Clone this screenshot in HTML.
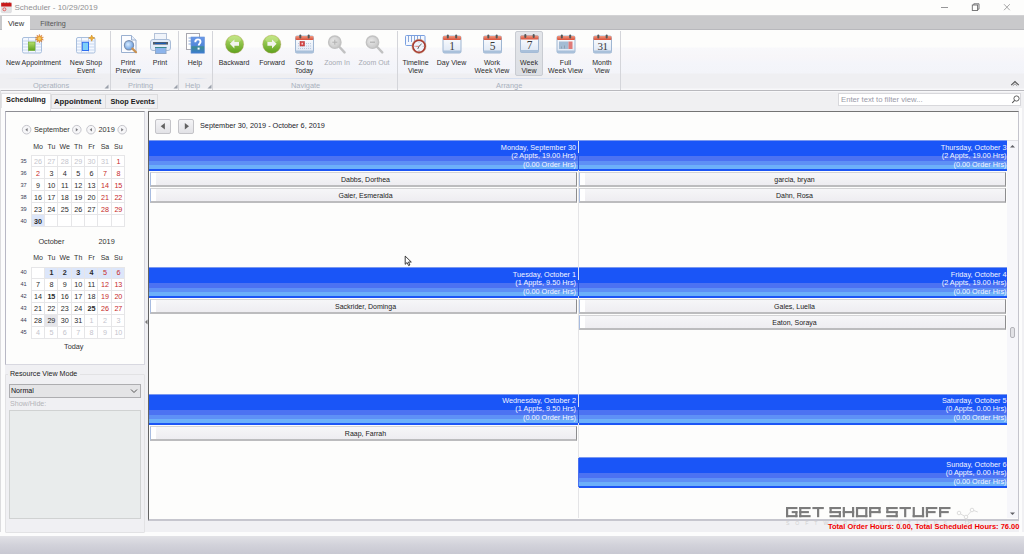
<!DOCTYPE html>
<html><head><meta charset="utf-8">
<style>
*{margin:0;padding:0;box-sizing:border-box}
html,body{width:1024px;height:554px;overflow:hidden;background:#f0f0f3;font-family:"Liberation Sans",sans-serif;color:#222}
.a{position:absolute}
.t{position:absolute;white-space:nowrap;line-height:1}
#title{left:0;top:0;width:1024px;height:15px;background:#fdfdfc}
#tabs{left:0;top:15px;width:1024px;height:15px;background:#c9c9cb;border-top:1px solid #d2d2d4;border-bottom:1px solid #b8b8bc}
#ribbon{left:0;top:30px;width:1024px;height:61px;background:linear-gradient(#fdfdfc 0,#fdfdfc 17px,#f8f8fb 18px,#f7f6f9 27px,#f4f5fa 33px,#f3f4f9 43px,#efeff2 44px,#efeff2 58px,#f8f8fa 59px,#f8f8fa 60px);border-bottom:1px solid #b9b9be}
.sep{position:absolute;top:31px;width:1px;height:59px;background:#d4d5da}
.gl{position:absolute;top:81.5px;font-size:7.4px;color:#a9b1bd;white-space:nowrap;line-height:1}
.rl{position:absolute;font-size:8px;color:#2a2a2a;white-space:nowrap;line-height:8.4px;text-align:center;transform:scaleX(0.875)}
.dis{color:#a7aab2}
#row2{left:0;top:91px;width:1024px;height:20px;background:linear-gradient(#f8f8fa 0,#f8f8fa 1px,#f0f0f2 1px)}
#status{left:0;top:536px;width:1024px;height:18px;background:linear-gradient(#e2e2e6 0,#dcdce2 3px,#d2d2da 9px,#c8c8d2 18px)}
#leftcal{left:5px;top:111px;width:140px;height:254px;background:#fdfdfc;border:1px solid #d8d8e0;border-top-color:#8e8e94;border-left-color:#b8b8c4}
#main{left:148px;top:111px;width:871px;height:410px;background:#fdfdfc;border-left:1px solid #646464;border-top:1px solid #747474;border-right:1px solid #c4c4cc;border-bottom:2px solid #c6c6ce}
</style></head><body>
<div id="title" class="a"></div>
<div class="t" style="left:14.5px;top:4px;font-size:8px;color:#909092">Scheduler - 10/29/2019</div>
<svg class="a" style="left:0;top:0" width="14" height="15"><rect x="1.2" y="3.5" width="10.2" height="9.2" rx="1" fill="#e2e2e4" stroke="#d0d0d4" stroke-width="0.5"/><rect x="1.2" y="2.7" width="10.3" height="3.8" fill="#c81818"/><path d="M2.5 2.7l1 -0.5 1 0.5M5.5 2.7l1-0.5 1 0.5M8.5 2.7l1-0.5 1 0.5" stroke="#e8e8e8" stroke-width="0.5"/><circle cx="4.4" cy="9.3" r="1.5" fill="none" stroke="#e85050" stroke-width="0.9"/></svg>
<svg class="a" style="left:930px;top:0" width="94" height="15"><path d="M11 7.5h7" stroke="#8a8a8c" stroke-width="0.9"/><rect x="42.3" y="5" width="5.3" height="5.5" fill="none" stroke="#6a6a6c" stroke-width="0.9"/><path d="M43.8 5v-1.2h5.2v5.4h-1.3" fill="none" stroke="#6a6a6c" stroke-width="0.9"/><path d="M74 4.2l5.8 6M79.8 4.2l-5.8 6" stroke="#909092" stroke-width="0.8"/></svg>
<div id="tabs" class="a"></div>
<div class="a" style="left:2px;top:16px;width:28px;height:15px;background:#fff"></div>
<div class="t" style="left:8px;top:19.8px;font-size:7.5px;color:#333">View</div>
<div class="t" style="left:40.2px;top:19.8px;font-size:7.2px;color:#555">Filtering</div>
<div id="ribbon" class="a"></div>

<div class="sep" style="left:110px"></div>
<div class="sep" style="left:178px"></div>
<div class="sep" style="left:212px"></div>
<div class="sep" style="left:397px"></div>
<div class="sep" style="left:620px"></div>
<div class="a" style="left:5px;top:78px;width:100px;height:1px;background:linear-gradient(90deg,rgba(200,215,240,0),#d4def0,rgba(200,215,240,0))"></div>
<div class="a" style="left:115px;top:78px;width:58px;height:1px;background:linear-gradient(90deg,rgba(200,215,240,0),#d4def0,rgba(200,215,240,0))"></div>
<div class="a" style="left:184px;top:78px;width:24px;height:1px;background:linear-gradient(90deg,rgba(200,215,240,0),#d4def0,rgba(200,215,240,0))"></div>
<div class="a" style="left:218px;top:78px;width:172px;height:1px;background:linear-gradient(90deg,rgba(200,215,240,0),#d4def0,rgba(200,215,240,0))"></div>
<div class="a" style="left:402px;top:78px;width:212px;height:1px;background:linear-gradient(90deg,rgba(200,215,240,0),#d4def0,rgba(200,215,240,0))"></div>
<!-- week view selected -->
<div class="a" style="left:515px;top:31px;width:28px;height:45px;background:linear-gradient(#e4e6ea,#dcdfe4);border:1px solid #c9ccd2;border-radius:2px"></div>
<svg class="a" style="left:0;top:0" width="640" height="60" viewBox="0 0 640 60">
<defs>
<linearGradient id="calbody" x1="0" y1="0" x2="0" y2="1"><stop offset="0" stop-color="#ffffff"/><stop offset="1" stop-color="#dce6f4"/></linearGradient>
<linearGradient id="calhdr" x1="0" y1="0" x2="0" y2="1"><stop offset="0" stop-color="#f09a80"/><stop offset="1" stop-color="#d9503a"/></linearGradient>
<linearGradient id="grn" x1="0" y1="0" x2="0" y2="1"><stop offset="0" stop-color="#b6e070"/><stop offset="1" stop-color="#5ea01c"/></linearGradient>
<linearGradient id="helpg" x1="0" y1="0" x2="0" y2="1"><stop offset="0" stop-color="#6b98e8"/><stop offset="0.55" stop-color="#4f86d8"/><stop offset="0.6" stop-color="#3d8c92"/><stop offset="1" stop-color="#3a7ad0"/></linearGradient>
<radialGradient id="lens" cx="0.4" cy="0.4" r="0.6"><stop offset="0" stop-color="#d8ecff"/><stop offset="1" stop-color="#6a9ee0"/></radialGradient>
<radialGradient id="glens" cx="0.4" cy="0.4" r="0.6"><stop offset="0" stop-color="#e6e6e6"/><stop offset="1" stop-color="#c4c4c4"/></radialGradient>
</defs>
<!-- New Appointment -->
<g>
<rect x="22.5" y="37.5" width="19" height="15.5" rx="1.5" fill="#f4f8ff" stroke="#a8bedc"/>
<path d="M23 41h18M23 44h18M23 47h18M23 50h18" stroke="#c8d8f0" stroke-width="1"/>
<path d="M28.5 38v15M35.5 38v15" stroke="#c4d2e6" stroke-width="1"/>
<rect x="28.5" y="42" width="6.5" height="8.5" fill="url(#grn)" stroke="#6aa828" stroke-width="0.6"/>
<path d="M39.40 34.30 L40.11 36.41 L41.93 35.12 L41.26 37.25 L43.49 37.27 L41.70 38.60 L43.49 39.93 L41.26 39.95 L41.93 42.08 L40.11 40.79 L39.40 42.90 L38.69 40.79 L36.87 42.08 L37.54 39.95 L35.31 39.93 L37.10 38.60 L35.31 37.27 L37.54 37.25 L36.87 35.12 L38.69 36.41 z" fill="#eaa22a" stroke="#d06a30" stroke-width="0.4"/><circle cx="39.4" cy="38.6" r="1.6" fill="#f6c860"/>
</g>
<!-- New Shop Event -->
<g>
<rect x="76.5" y="37.5" width="18.5" height="15.5" rx="1.5" fill="#f4f8ff" stroke="#a8bedc"/>
<path d="M77 41h18M77 44h18M77 47h18M77 50h18" stroke="#c8d8f0" stroke-width="1"/>
<path d="M81.5 38v15M88.5 38v15" stroke="#c4d2e6" stroke-width="1"/>
<rect x="82.3" y="42.3" width="6.2" height="8.2" fill="#7cd0f8" stroke="#2f6ef0" stroke-width="1"/>
<path d="M91.7 35l0.9 2.2 2.2 0.8-2.2 0.8-0.9 2.4-0.9-2.4-2.2-0.8 2.2-0.8z" fill="#f0b030" stroke="#d08a20" stroke-width="0.6"/>
</g>
<!-- Print Preview -->
<g>
<path d="M121.5 35.5h10l4.5 4.5v12.5h-14.5z" fill="#fbfcff" stroke="#9ab0d0"/>
<path d="M131.5 35.5v4.5h4.5" fill="#e8eef8" stroke="#9ab0d0"/>
<circle cx="129" cy="45.3" r="4.6" fill="url(#lens)" stroke="#7a90b0" stroke-width="1.2"/>
<path d="M132.4 48.6l3.6 3.6" stroke="#c89050" stroke-width="2.2" stroke-linecap="round"/>
</g>
<!-- Print -->
<g>
<rect x="154.5" y="33.5" width="12" height="8" fill="#f0f4fa" stroke="#b4c2d8"/>
<rect x="150.5" y="39.5" width="20" height="11" rx="2.5" fill="#e4ecf8" stroke="#a8bcd8"/>
<rect x="153" y="42" width="15" height="2.6" fill="#555e6a"/>
<rect x="155" y="42.8" width="11" height="1.2" fill="#1a5ab0"/>
<rect x="155.5" y="47.5" width="10.5" height="6" fill="#8cb4ec" stroke="#90a8c8"/>
<rect x="155" y="47" width="11.5" height="1" fill="#3a8a90"/>
</g>
<!-- Help -->
<g>
<rect x="186.5" y="33.5" width="13" height="16" fill="#fff" stroke="#a8a8b0"/>
<path d="M188.5 38h3M188.5 41h3M188.5 44h3" stroke="#8aa8d8" stroke-width="1"/>
<rect x="191" y="37" width="13.5" height="16.2" fill="url(#helpg)" stroke="#6a94d8" stroke-width="0.6"/>
<path d="M195.3 42.2c0-1.8 1.2-2.8 2.6-2.8s2.6 1 2.6 2.4c0 1.6-1.8 2-1.8 3.6" fill="none" stroke="#fff" stroke-width="1.9"/>
<rect x="197.6" y="47.6" width="2" height="2" fill="#fff"/>
</g>
<!-- Backward / Forward -->
<g>
<circle cx="234.6" cy="44.2" r="9.1" fill="url(#grn)" stroke="#c0a070" stroke-width="0.4"/>
<ellipse cx="234.6" cy="39.6" rx="6.5" ry="3.5" fill="#d4f0a0" opacity="0.45"/>
<path d="M229.8 43.8l4.6-4.4v2.6h4.6v3.8h-4.6v2.6z" fill="#f2f4ee"/>
<circle cx="271.8" cy="44.2" r="9.1" fill="url(#grn)" stroke="#c0a070" stroke-width="0.4"/>
<ellipse cx="271.8" cy="39.6" rx="6.5" ry="3.5" fill="#d4f0a0" opacity="0.45"/>
<path d="M276.6 43.8l-4.6-4.4v2.6h-4.6v3.8h4.6v2.6z" fill="#f2f4ee"/>
</g>
<!-- Zoom in/out -->
<g opacity="0.9">
<circle cx="334.8" cy="42.2" r="6.2" fill="url(#glens)" stroke="#bdbdbd" stroke-width="1.4"/>
<path d="M339.3 46.8l5.2 5.6" stroke="#bcbcbc" stroke-width="2.4" stroke-linecap="round"/>
<path d="M332.3 42.2h5M334.8 39.7v5" stroke="#a8a8a8" stroke-width="1"/>
<circle cx="372.5" cy="42.2" r="6.2" fill="url(#glens)" stroke="#bdbdbd" stroke-width="1.4"/>
<path d="M377 46.8l5.2 5.6" stroke="#bcbcbc" stroke-width="2.4" stroke-linecap="round"/>
<path d="M370 42.2h5" stroke="#a8a8a8" stroke-width="1.2"/>
</g>
<!-- Timeline -->
<g>
<rect x="405.5" y="35.5" width="19.5" height="10" rx="1" fill="#f4f8ff" stroke="#7aa0e0"/>
<path d="M408.5 36v6M411.5 36v6M414.5 36v6M417.5 36v6M420.5 36v6" stroke="#8aa8d8" stroke-width="1"/>
<circle cx="419" cy="46.3" r="6.2" fill="#eef4fc" stroke="#a83a30" stroke-width="1.8"/><circle cx="419" cy="46.3" r="7.1" fill="none" stroke="#c8a080" stroke-width="0.5"/>
<path d="M419 46.3l2.6-2.4M419 46.3l-1.2 2.6" stroke="#505050" stroke-width="0.9"/><path d="M419 41.6v1M419 50v1M414.3 46.3h1M422.7 46.3h1" stroke="#8a8a8a" stroke-width="0.6"/><path d="M419 46.3h-3.5" stroke="#d03020" stroke-width="0.6"/>
</g>
<g transform="translate(295,34.5)">
<rect x="0.5" y="1.5" width="18" height="17" rx="1.5" fill="url(#calbody)" stroke="#9fb6d2" stroke-width="1"/>
<rect x="0.5" y="1.5" width="18" height="4" rx="1" fill="url(#calhdr)"/>
<rect x="0.5" y="16" width="18" height="2.5" fill="#a9c0da"/>
<rect x="4.32" y="0" width="2" height="4" rx="1" fill="#555"/>
<rect x="12.68" y="0" width="2" height="4" rx="1" fill="#555"/>
<path d="M3 9h13M3 11.5h13M3 14h13" stroke="#b0c0d8" stroke-width="0.8" stroke-dasharray="1 1"/><rect x="5" y="7" width="4.5" height="4.5" fill="#d84848" stroke="#b03030" stroke-width="0.5"/><rect x="6.5" y="8.3" width="1.5" height="1.8" fill="#f0d0d0"/>
</g><g transform="translate(442.5,34.5)">
<rect x="0.5" y="1.5" width="18" height="17" rx="1.5" fill="url(#calbody)" stroke="#9fb6d2" stroke-width="1"/>
<rect x="0.5" y="1.5" width="18" height="4" rx="1" fill="url(#calhdr)"/>
<rect x="0.5" y="16" width="18" height="2.5" fill="#a9c0da"/>
<rect x="4.32" y="0" width="2" height="4" rx="1" fill="#555"/>
<rect x="12.68" y="0" width="2" height="4" rx="1" fill="#555"/>
<text x="9.5" y="15" font-family="Liberation Serif" font-size="11.5" text-anchor="middle" fill="#3a3a3a">1</text>
</g><g transform="translate(483,34.5)">
<rect x="0.5" y="1.5" width="18" height="17" rx="1.5" fill="url(#calbody)" stroke="#9fb6d2" stroke-width="1"/>
<rect x="0.5" y="1.5" width="18" height="4" rx="1" fill="url(#calhdr)"/>
<rect x="0.5" y="16" width="18" height="2.5" fill="#a9c0da"/>
<rect x="4.32" y="0" width="2" height="4" rx="1" fill="#555"/>
<rect x="12.68" y="0" width="2" height="4" rx="1" fill="#555"/>
<text x="9.5" y="15" font-family="Liberation Serif" font-size="11.5" text-anchor="middle" fill="#3a3a3a">5</text>
</g><g transform="translate(520,34)">
<rect x="0.5" y="1.5" width="18" height="17" rx="1.5" fill="url(#calbody)" stroke="#9fb6d2" stroke-width="1"/>
<rect x="0.5" y="1.5" width="18" height="4" rx="1" fill="url(#calhdr)"/>
<rect x="0.5" y="16" width="18" height="2.5" fill="#a9c0da"/>
<rect x="4.32" y="0" width="2" height="4" rx="1" fill="#555"/>
<rect x="12.68" y="0" width="2" height="4" rx="1" fill="#555"/>
<text x="9.5" y="15" font-family="Liberation Serif" font-size="11.5" text-anchor="middle" fill="#3a3a3a">7</text>
</g><g transform="translate(556.5,34.5)">
<rect x="0.5" y="1.5" width="18" height="17" rx="1.5" fill="url(#calbody)" stroke="#9fb6d2" stroke-width="1"/>
<rect x="0.5" y="1.5" width="18" height="4" rx="1" fill="url(#calhdr)"/>
<rect x="0.5" y="16" width="18" height="2.5" fill="#a9c0da"/>
<rect x="4.32" y="0" width="2" height="4" rx="1" fill="#555"/>
<rect x="12.68" y="0" width="2" height="4" rx="1" fill="#555"/>
<rect x="2.5" y="7" width="9.5" height="7.5" fill="#a4bcd4"/><rect x="12" y="7" width="4" height="7.5" fill="#e07a78"/><path d="M5 14v-2M8 14v-3" stroke="#8a9aaa" stroke-width="0.8"/>
</g><g transform="translate(593,34.5)">
<rect x="0.5" y="1.5" width="18" height="17" rx="1.5" fill="url(#calbody)" stroke="#9fb6d2" stroke-width="1"/>
<rect x="0.5" y="1.5" width="18" height="4" rx="1" fill="url(#calhdr)"/>
<rect x="0.5" y="16" width="18" height="2.5" fill="#a9c0da"/>
<rect x="4.32" y="0" width="2" height="4" rx="1" fill="#555"/>
<rect x="12.68" y="0" width="2" height="4" rx="1" fill="#555"/>
<text x="9.5" y="15" font-family="Liberation Serif" font-size="11" text-anchor="middle" fill="#3a3a3a" letter-spacing="-0.5">31</text>
</g>
</svg>
<div class="gl" style="left:33px">Operations</div>
<div class="gl" style="left:128px">Printing</div>
<div class="gl" style="left:185px">Help</div>
<div class="gl" style="left:291px">Navigate</div>
<div class="gl" style="left:496px">Arrange</div>
<div class="rl" style="left:0px;top:58.8px;width:67px">New Appointment</div>
<div class="rl" style="left:66px;top:58.8px;width:40px">New Shop<br>Event</div>
<div class="rl" style="left:113px;top:58.8px;width:30px">Print<br>Preview</div>
<div class="rl" style="left:145px;top:58.8px;width:30px">Print</div>
<div class="rl" style="left:180px;top:58.8px;width:30px">Help</div>
<div class="rl" style="left:215px;top:58.8px;width:38px">Backward</div>
<div class="rl" style="left:253px;top:58.8px;width:38px">Forward</div>
<div class="rl" style="left:289px;top:58.8px;width:30px">Go to<br>Today</div>
<div class="rl dis" style="left:318px;top:58.8px;width:38px">Zoom In</div>
<div class="rl dis" style="left:354px;top:58.8px;width:40px">Zoom Out</div>
<div class="rl" style="left:400px;top:58.8px;width:31px">Timeline<br>View</div>
<div class="rl" style="left:433px;top:58.8px;width:37px">Day View</div>
<div class="rl" style="left:472px;top:58.8px;width:40px">Work<br>Week View</div>
<div class="rl" style="left:514px;top:58.8px;width:30px">Week<br>View</div>
<div class="rl" style="left:545px;top:58.8px;width:41px">Full<br>Week View</div>
<div class="rl" style="left:587px;top:58.8px;width:30px">Month<br>View</div>
<div id="row2" class="a"></div><svg class="a" style="left:1010px;top:79px" width="10" height="8"><path d="M1.2 6.2l3.8-3.6 3.8 3.6" fill="none" stroke="#555" stroke-width="1.1"/><path d="M2.8 6.8l2.2-2 2.2 2" fill="none" stroke="#777" stroke-width="0.8"/></svg><svg class="a" style="left:104px;top:84px" width="5" height="5"><path d="M4.5 0.5v4h-4z" fill="#9aa0aa"/></svg><svg class="a" style="left:173px;top:84px" width="5" height="5"><path d="M4.5 0.5v4h-4z" fill="#9aa0aa"/></svg><svg class="a" style="left:207px;top:84px" width="5" height="5"><path d="M4.5 0.5v4h-4z" fill="#9aa0aa"/></svg>
<div class="a" style="left:1px;top:108px;width:147px;height:3px;background:#fcfcfc"></div><div id="leftcal" class="a"></div>
<div id="main" class="a"></div>

<div class="a" style="left:1px;top:93px;width:50px;height:18px;background:#fdfdfd;border:1px solid #e2e2e4;border-bottom:none"></div>
<div class="a" style="left:51px;top:94px;width:55px;height:15px;background:#efeff1;border:1px solid #dcdcde"></div>
<div class="a" style="left:105px;top:94px;width:53px;height:15px;background:#efeff1;border:1px solid #dcdcde"></div>
<div class="t" style="left:6px;top:96px;font-size:7.4px;font-weight:bold;color:#1a1a1a">Scheduling</div>
<div class="t" style="left:54px;top:98px;font-size:7.7px;font-weight:bold;color:#1a1a1a">Appointment</div>
<div class="t" style="left:110.5px;top:98px;font-size:7.3px;font-weight:bold;color:#1a1a1a">Shop Events</div>
<div class="a" style="left:838px;top:93px;width:183px;height:13px;background:#fff;border:1px solid #d8d8dc"></div>
<div class="t" style="left:841px;top:95.7px;font-size:7.7px;color:#9a9aa8">Enter text to filter view...</div>
<svg class="a" style="left:1010px;top:94px" width="12" height="11"><circle cx="6.5" cy="4.5" r="2.6" fill="none" stroke="#505050" stroke-width="0.9"/><path d="M4.6 6.4l-2.4 2.6" stroke="#505050" stroke-width="1.1"/></svg>

<div class="a" style="left:0px;top:90px;width:1px;height:446px;background:#dcdcde"></div><div class="a" style="left:1px;top:108px;width:4px;height:428px;background:#fcfcfc"></div><div class="a" style="left:0px;top:532px;width:1024px;height:4px;background:#fcfcfc"></div><div class="a" style="left:1019px;top:108px;width:3px;height:428px;background:#fcfcfc"></div>
<div class="a" style="left:0;top:0"><svg class="a" style="left:0;top:0" width="150" height="140" viewBox="0 0 150 140"><circle cx="26.6" cy="129.7" r="4.3" fill="#f6f6f8" stroke="#c0c0c6" stroke-width="0.9"/><path d="M25.3 129.8L27.6 128.0L27.6 131.6z" fill="#7a7a7e"/><circle cx="76.8" cy="129.7" r="4.3" fill="#f6f6f8" stroke="#c0c0c6" stroke-width="0.9"/><path d="M78.1 129.8L75.8 128.0L75.8 131.6z" fill="#7a7a7e"/><circle cx="91.0" cy="129.7" r="4.3" fill="#f6f6f8" stroke="#c0c0c6" stroke-width="0.9"/><path d="M89.7 129.8L92.0 128.0L92.0 131.6z" fill="#7a7a7e"/><circle cx="122.2" cy="129.7" r="4.3" fill="#f6f6f8" stroke="#c0c0c6" stroke-width="0.9"/><path d="M123.5 129.8L121.2 128.0L121.2 131.6z" fill="#7a7a7e"/></svg></div>
<div class="t" style="left:34px;top:126.3px;font-size:7.3px;color:#333">September</div>
<div class="t" style="left:98.5px;top:126.3px;font-size:7.3px;color:#333">2019</div>
<div class="t" style="left:38.4px;top:237.6px;font-size:7.3px;color:#333">October</div>
<div class="t" style="left:98.5px;top:237.6px;font-size:7.3px;color:#333">2019</div>
<div class="t" style="left:64px;top:343.2px;font-size:7.3px;color:#333">Today</div>
<div class="t" style="left:31.3px;top:143.0px;width:13.4px;text-align:center;font-size:7px;color:#333">Mo</div>
<div class="t" style="left:44.7px;top:143.0px;width:13.4px;text-align:center;font-size:7px;color:#333">Tu</div>
<div class="t" style="left:58.1px;top:143.0px;width:13.4px;text-align:center;font-size:7px;color:#333">We</div>
<div class="t" style="left:71.5px;top:143.0px;width:13.4px;text-align:center;font-size:7px;color:#333">Th</div>
<div class="t" style="left:84.9px;top:143.0px;width:13.4px;text-align:center;font-size:7px;color:#333">Fr</div>
<div class="t" style="left:98.3px;top:143.0px;width:13.4px;text-align:center;font-size:7px;color:#333">Sa</div>
<div class="t" style="left:111.7px;top:143.0px;width:13.4px;text-align:center;font-size:7px;color:#333">Su</div>
<div class="a" style="left:31px;top:155.0px;width:94px;height:72px;background:#fff"></div>
<div class="t" style="left:17px;top:158.6px;width:13px;text-align:center;font-size:5.6px;color:#3a3a55">35</div>
<div class="a" style="left:31px;top:155.0px;width:14px;height:12px;border-right:1px solid #e6e6e8;border-bottom:1px solid #e6e6e8"></div>
<div class="t" style="left:31.3px;top:157.6px;width:13.4px;text-align:center;font-size:7.2px;font-weight:normal;color:#c4c4cc">26</div>
<div class="a" style="left:45px;top:155.0px;width:13px;height:12px;border-right:1px solid #e6e6e8;border-bottom:1px solid #e6e6e8"></div>
<div class="t" style="left:44.7px;top:157.6px;width:13.4px;text-align:center;font-size:7.2px;font-weight:normal;color:#c4c4cc">27</div>
<div class="a" style="left:58px;top:155.0px;width:14px;height:12px;border-right:1px solid #e6e6e8;border-bottom:1px solid #e6e6e8"></div>
<div class="t" style="left:58.1px;top:157.6px;width:13.4px;text-align:center;font-size:7.2px;font-weight:normal;color:#c4c4cc">28</div>
<div class="a" style="left:72px;top:155.0px;width:13px;height:12px;border-right:1px solid #e6e6e8;border-bottom:1px solid #e6e6e8"></div>
<div class="t" style="left:71.5px;top:157.6px;width:13.4px;text-align:center;font-size:7.2px;font-weight:normal;color:#c4c4cc">29</div>
<div class="a" style="left:85px;top:155.0px;width:13px;height:12px;border-right:1px solid #e6e6e8;border-bottom:1px solid #e6e6e8"></div>
<div class="t" style="left:84.9px;top:157.6px;width:13.4px;text-align:center;font-size:7.2px;font-weight:normal;color:#c4c4cc">30</div>
<div class="a" style="left:98px;top:155.0px;width:14px;height:12px;border-right:1px solid #e6e6e8;border-bottom:1px solid #e6e6e8"></div>
<div class="t" style="left:98.3px;top:157.6px;width:13.4px;text-align:center;font-size:7.2px;font-weight:normal;color:#c4c4cc">31</div>
<div class="a" style="left:112px;top:155.0px;width:13px;height:12px;border-right:1px solid #e6e6e8;border-bottom:1px solid #e6e6e8"></div>
<div class="t" style="left:111.7px;top:157.6px;width:13.4px;text-align:center;font-size:7.2px;font-weight:normal;color:#c62a2a">1</div>
<div class="t" style="left:17px;top:170.6px;width:13px;text-align:center;font-size:5.6px;color:#3a3a55">36</div>
<div class="a" style="left:31px;top:167.0px;width:14px;height:12px;border-right:1px solid #e6e6e8;border-bottom:1px solid #e6e6e8"></div>
<div class="t" style="left:31.3px;top:169.6px;width:13.4px;text-align:center;font-size:7.2px;font-weight:normal;color:#c62a2a">2</div>
<div class="a" style="left:45px;top:167.0px;width:13px;height:12px;border-right:1px solid #e6e6e8;border-bottom:1px solid #e6e6e8"></div>
<div class="t" style="left:44.7px;top:169.6px;width:13.4px;text-align:center;font-size:7.2px;font-weight:normal;color:#2a2a2a">3</div>
<div class="a" style="left:58px;top:167.0px;width:14px;height:12px;border-right:1px solid #e6e6e8;border-bottom:1px solid #e6e6e8"></div>
<div class="t" style="left:58.1px;top:169.6px;width:13.4px;text-align:center;font-size:7.2px;font-weight:normal;color:#2a2a2a">4</div>
<div class="a" style="left:72px;top:167.0px;width:13px;height:12px;border-right:1px solid #e6e6e8;border-bottom:1px solid #e6e6e8"></div>
<div class="t" style="left:71.5px;top:169.6px;width:13.4px;text-align:center;font-size:7.2px;font-weight:normal;color:#2a2a2a">5</div>
<div class="a" style="left:85px;top:167.0px;width:13px;height:12px;border-right:1px solid #e6e6e8;border-bottom:1px solid #e6e6e8"></div>
<div class="t" style="left:84.9px;top:169.6px;width:13.4px;text-align:center;font-size:7.2px;font-weight:normal;color:#2a2a2a">6</div>
<div class="a" style="left:98px;top:167.0px;width:14px;height:12px;border-right:1px solid #e6e6e8;border-bottom:1px solid #e6e6e8"></div>
<div class="t" style="left:98.3px;top:169.6px;width:13.4px;text-align:center;font-size:7.2px;font-weight:normal;color:#c62a2a">7</div>
<div class="a" style="left:112px;top:167.0px;width:13px;height:12px;border-right:1px solid #e6e6e8;border-bottom:1px solid #e6e6e8"></div>
<div class="t" style="left:111.7px;top:169.6px;width:13.4px;text-align:center;font-size:7.2px;font-weight:normal;color:#c62a2a">8</div>
<div class="t" style="left:17px;top:182.6px;width:13px;text-align:center;font-size:5.6px;color:#3a3a55">37</div>
<div class="a" style="left:31px;top:179.0px;width:14px;height:12px;border-right:1px solid #e6e6e8;border-bottom:1px solid #e6e6e8"></div>
<div class="t" style="left:31.3px;top:181.6px;width:13.4px;text-align:center;font-size:7.2px;font-weight:normal;color:#2a2a2a">9</div>
<div class="a" style="left:45px;top:179.0px;width:13px;height:12px;border-right:1px solid #e6e6e8;border-bottom:1px solid #e6e6e8"></div>
<div class="t" style="left:44.7px;top:181.6px;width:13.4px;text-align:center;font-size:7.2px;font-weight:normal;color:#2a2a2a">10</div>
<div class="a" style="left:58px;top:179.0px;width:14px;height:12px;border-right:1px solid #e6e6e8;border-bottom:1px solid #e6e6e8"></div>
<div class="t" style="left:58.1px;top:181.6px;width:13.4px;text-align:center;font-size:7.2px;font-weight:normal;color:#2a2a2a">11</div>
<div class="a" style="left:72px;top:179.0px;width:13px;height:12px;border-right:1px solid #e6e6e8;border-bottom:1px solid #e6e6e8"></div>
<div class="t" style="left:71.5px;top:181.6px;width:13.4px;text-align:center;font-size:7.2px;font-weight:normal;color:#2a2a2a">12</div>
<div class="a" style="left:85px;top:179.0px;width:13px;height:12px;border-right:1px solid #e6e6e8;border-bottom:1px solid #e6e6e8"></div>
<div class="t" style="left:84.9px;top:181.6px;width:13.4px;text-align:center;font-size:7.2px;font-weight:normal;color:#2a2a2a">13</div>
<div class="a" style="left:98px;top:179.0px;width:14px;height:12px;border-right:1px solid #e6e6e8;border-bottom:1px solid #e6e6e8"></div>
<div class="t" style="left:98.3px;top:181.6px;width:13.4px;text-align:center;font-size:7.2px;font-weight:normal;color:#c62a2a">14</div>
<div class="a" style="left:112px;top:179.0px;width:13px;height:12px;border-right:1px solid #e6e6e8;border-bottom:1px solid #e6e6e8"></div>
<div class="t" style="left:111.7px;top:181.6px;width:13.4px;text-align:center;font-size:7.2px;font-weight:normal;color:#c62a2a">15</div>
<div class="t" style="left:17px;top:194.6px;width:13px;text-align:center;font-size:5.6px;color:#3a3a55">38</div>
<div class="a" style="left:31px;top:191.0px;width:14px;height:12px;border-right:1px solid #e6e6e8;border-bottom:1px solid #e6e6e8"></div>
<div class="t" style="left:31.3px;top:193.6px;width:13.4px;text-align:center;font-size:7.2px;font-weight:normal;color:#2a2a2a">16</div>
<div class="a" style="left:45px;top:191.0px;width:13px;height:12px;border-right:1px solid #e6e6e8;border-bottom:1px solid #e6e6e8"></div>
<div class="t" style="left:44.7px;top:193.6px;width:13.4px;text-align:center;font-size:7.2px;font-weight:normal;color:#2a2a2a">17</div>
<div class="a" style="left:58px;top:191.0px;width:14px;height:12px;border-right:1px solid #e6e6e8;border-bottom:1px solid #e6e6e8"></div>
<div class="t" style="left:58.1px;top:193.6px;width:13.4px;text-align:center;font-size:7.2px;font-weight:normal;color:#2a2a2a">18</div>
<div class="a" style="left:72px;top:191.0px;width:13px;height:12px;border-right:1px solid #e6e6e8;border-bottom:1px solid #e6e6e8"></div>
<div class="t" style="left:71.5px;top:193.6px;width:13.4px;text-align:center;font-size:7.2px;font-weight:normal;color:#2a2a2a">19</div>
<div class="a" style="left:85px;top:191.0px;width:13px;height:12px;border-right:1px solid #e6e6e8;border-bottom:1px solid #e6e6e8"></div>
<div class="t" style="left:84.9px;top:193.6px;width:13.4px;text-align:center;font-size:7.2px;font-weight:normal;color:#2a2a2a">20</div>
<div class="a" style="left:98px;top:191.0px;width:14px;height:12px;border-right:1px solid #e6e6e8;border-bottom:1px solid #e6e6e8"></div>
<div class="t" style="left:98.3px;top:193.6px;width:13.4px;text-align:center;font-size:7.2px;font-weight:normal;color:#c62a2a">21</div>
<div class="a" style="left:112px;top:191.0px;width:13px;height:12px;border-right:1px solid #e6e6e8;border-bottom:1px solid #e6e6e8"></div>
<div class="t" style="left:111.7px;top:193.6px;width:13.4px;text-align:center;font-size:7.2px;font-weight:normal;color:#c62a2a">22</div>
<div class="t" style="left:17px;top:206.6px;width:13px;text-align:center;font-size:5.6px;color:#3a3a55">39</div>
<div class="a" style="left:31px;top:203.0px;width:14px;height:12px;border-right:1px solid #e6e6e8;border-bottom:1px solid #e6e6e8"></div>
<div class="t" style="left:31.3px;top:205.6px;width:13.4px;text-align:center;font-size:7.2px;font-weight:normal;color:#2a2a2a">23</div>
<div class="a" style="left:45px;top:203.0px;width:13px;height:12px;border-right:1px solid #e6e6e8;border-bottom:1px solid #e6e6e8"></div>
<div class="t" style="left:44.7px;top:205.6px;width:13.4px;text-align:center;font-size:7.2px;font-weight:normal;color:#2a2a2a">24</div>
<div class="a" style="left:58px;top:203.0px;width:14px;height:12px;border-right:1px solid #e6e6e8;border-bottom:1px solid #e6e6e8"></div>
<div class="t" style="left:58.1px;top:205.6px;width:13.4px;text-align:center;font-size:7.2px;font-weight:normal;color:#2a2a2a">25</div>
<div class="a" style="left:72px;top:203.0px;width:13px;height:12px;border-right:1px solid #e6e6e8;border-bottom:1px solid #e6e6e8"></div>
<div class="t" style="left:71.5px;top:205.6px;width:13.4px;text-align:center;font-size:7.2px;font-weight:normal;color:#2a2a2a">26</div>
<div class="a" style="left:85px;top:203.0px;width:13px;height:12px;border-right:1px solid #e6e6e8;border-bottom:1px solid #e6e6e8"></div>
<div class="t" style="left:84.9px;top:205.6px;width:13.4px;text-align:center;font-size:7.2px;font-weight:normal;color:#2a2a2a">27</div>
<div class="a" style="left:98px;top:203.0px;width:14px;height:12px;border-right:1px solid #e6e6e8;border-bottom:1px solid #e6e6e8"></div>
<div class="t" style="left:98.3px;top:205.6px;width:13.4px;text-align:center;font-size:7.2px;font-weight:normal;color:#c62a2a">28</div>
<div class="a" style="left:112px;top:203.0px;width:13px;height:12px;border-right:1px solid #e6e6e8;border-bottom:1px solid #e6e6e8"></div>
<div class="t" style="left:111.7px;top:205.6px;width:13.4px;text-align:center;font-size:7.2px;font-weight:normal;color:#c62a2a">29</div>
<div class="t" style="left:17px;top:218.6px;width:13px;text-align:center;font-size:5.6px;color:#3a3a55">40</div>
<div class="a" style="left:31px;top:215.0px;width:14px;height:12px;background:#dce6fa;border-right:1px solid #e6e6e8;border-bottom:1px solid #e6e6e8"></div>
<div class="t" style="left:31.3px;top:217.6px;width:13.4px;text-align:center;font-size:7.2px;font-weight:bold;color:#2a2a2a">30</div>
<div class="a" style="left:45px;top:215.0px;width:13px;height:12px;border-right:1px solid #e6e6e8;border-bottom:1px solid #e6e6e8"></div>
<div class="a" style="left:58px;top:215.0px;width:14px;height:12px;border-right:1px solid #e6e6e8;border-bottom:1px solid #e6e6e8"></div>
<div class="a" style="left:72px;top:215.0px;width:13px;height:12px;border-right:1px solid #e6e6e8;border-bottom:1px solid #e6e6e8"></div>
<div class="a" style="left:85px;top:215.0px;width:13px;height:12px;border-right:1px solid #e6e6e8;border-bottom:1px solid #e6e6e8"></div>
<div class="a" style="left:98px;top:215.0px;width:14px;height:12px;border-right:1px solid #e6e6e8;border-bottom:1px solid #e6e6e8"></div>
<div class="a" style="left:112px;top:215.0px;width:13px;height:12px;border-right:1px solid #e6e6e8;border-bottom:1px solid #e6e6e8"></div>
<div class="a" style="left:31px;top:155.0px;width:94px;height:1px;background:#e6e6e8"></div>
<div class="a" style="left:31px;top:155.0px;width:1px;height:72px;background:#e6e6e8"></div>
<div class="t" style="left:31.3px;top:254.0px;width:13.4px;text-align:center;font-size:7px;color:#333">Mo</div>
<div class="t" style="left:44.7px;top:254.0px;width:13.4px;text-align:center;font-size:7px;color:#333">Tu</div>
<div class="t" style="left:58.1px;top:254.0px;width:13.4px;text-align:center;font-size:7px;color:#333">We</div>
<div class="t" style="left:71.5px;top:254.0px;width:13.4px;text-align:center;font-size:7px;color:#333">Th</div>
<div class="t" style="left:84.9px;top:254.0px;width:13.4px;text-align:center;font-size:7px;color:#333">Fr</div>
<div class="t" style="left:98.3px;top:254.0px;width:13.4px;text-align:center;font-size:7px;color:#333">Sa</div>
<div class="t" style="left:111.7px;top:254.0px;width:13.4px;text-align:center;font-size:7px;color:#333">Su</div>
<div class="a" style="left:31px;top:266.5px;width:94px;height:72px;background:#fff"></div>
<div class="t" style="left:17px;top:270.1px;width:13px;text-align:center;font-size:5.6px;color:#3a3a55">40</div>
<div class="a" style="left:31px;top:266.5px;width:14px;height:12px;border-right:1px solid #e6e6e8;border-bottom:1px solid #e6e6e8"></div>
<div class="a" style="left:45px;top:266.5px;width:13px;height:12px;background:#dce6fa;border-right:1px solid #e6e6e8;border-bottom:1px solid #e6e6e8"></div>
<div class="t" style="left:44.7px;top:269.1px;width:13.4px;text-align:center;font-size:7.2px;font-weight:bold;color:#2a2a2a">1</div>
<div class="a" style="left:58px;top:266.5px;width:14px;height:12px;background:#dce6fa;border-right:1px solid #e6e6e8;border-bottom:1px solid #e6e6e8"></div>
<div class="t" style="left:58.1px;top:269.1px;width:13.4px;text-align:center;font-size:7.2px;font-weight:bold;color:#2a2a2a">2</div>
<div class="a" style="left:72px;top:266.5px;width:13px;height:12px;background:#dce6fa;border-right:1px solid #e6e6e8;border-bottom:1px solid #e6e6e8"></div>
<div class="t" style="left:71.5px;top:269.1px;width:13.4px;text-align:center;font-size:7.2px;font-weight:bold;color:#2a2a2a">3</div>
<div class="a" style="left:85px;top:266.5px;width:13px;height:12px;background:#dce6fa;border-right:1px solid #e6e6e8;border-bottom:1px solid #e6e6e8"></div>
<div class="t" style="left:84.9px;top:269.1px;width:13.4px;text-align:center;font-size:7.2px;font-weight:bold;color:#2a2a2a">4</div>
<div class="a" style="left:98px;top:266.5px;width:14px;height:12px;background:#dce6fa;border-right:1px solid #e6e6e8;border-bottom:1px solid #e6e6e8"></div>
<div class="t" style="left:98.3px;top:269.1px;width:13.4px;text-align:center;font-size:7.2px;font-weight:normal;color:#c62a2a">5</div>
<div class="a" style="left:112px;top:266.5px;width:13px;height:12px;background:#dce6fa;border-right:1px solid #e6e6e8;border-bottom:1px solid #e6e6e8"></div>
<div class="t" style="left:111.7px;top:269.1px;width:13.4px;text-align:center;font-size:7.2px;font-weight:normal;color:#c62a2a">6</div>
<div class="t" style="left:17px;top:282.1px;width:13px;text-align:center;font-size:5.6px;color:#3a3a55">41</div>
<div class="a" style="left:31px;top:278.5px;width:14px;height:12px;border-right:1px solid #e6e6e8;border-bottom:1px solid #e6e6e8"></div>
<div class="t" style="left:31.3px;top:281.1px;width:13.4px;text-align:center;font-size:7.2px;font-weight:normal;color:#2a2a2a">7</div>
<div class="a" style="left:45px;top:278.5px;width:13px;height:12px;border-right:1px solid #e6e6e8;border-bottom:1px solid #e6e6e8"></div>
<div class="t" style="left:44.7px;top:281.1px;width:13.4px;text-align:center;font-size:7.2px;font-weight:normal;color:#2a2a2a">8</div>
<div class="a" style="left:58px;top:278.5px;width:14px;height:12px;border-right:1px solid #e6e6e8;border-bottom:1px solid #e6e6e8"></div>
<div class="t" style="left:58.1px;top:281.1px;width:13.4px;text-align:center;font-size:7.2px;font-weight:normal;color:#2a2a2a">9</div>
<div class="a" style="left:72px;top:278.5px;width:13px;height:12px;border-right:1px solid #e6e6e8;border-bottom:1px solid #e6e6e8"></div>
<div class="t" style="left:71.5px;top:281.1px;width:13.4px;text-align:center;font-size:7.2px;font-weight:normal;color:#2a2a2a">10</div>
<div class="a" style="left:85px;top:278.5px;width:13px;height:12px;border-right:1px solid #e6e6e8;border-bottom:1px solid #e6e6e8"></div>
<div class="t" style="left:84.9px;top:281.1px;width:13.4px;text-align:center;font-size:7.2px;font-weight:normal;color:#2a2a2a">11</div>
<div class="a" style="left:98px;top:278.5px;width:14px;height:12px;border-right:1px solid #e6e6e8;border-bottom:1px solid #e6e6e8"></div>
<div class="t" style="left:98.3px;top:281.1px;width:13.4px;text-align:center;font-size:7.2px;font-weight:normal;color:#c62a2a">12</div>
<div class="a" style="left:112px;top:278.5px;width:13px;height:12px;border-right:1px solid #e6e6e8;border-bottom:1px solid #e6e6e8"></div>
<div class="t" style="left:111.7px;top:281.1px;width:13.4px;text-align:center;font-size:7.2px;font-weight:normal;color:#c62a2a">13</div>
<div class="t" style="left:17px;top:294.1px;width:13px;text-align:center;font-size:5.6px;color:#3a3a55">42</div>
<div class="a" style="left:31px;top:290.5px;width:14px;height:12px;border-right:1px solid #e6e6e8;border-bottom:1px solid #e6e6e8"></div>
<div class="t" style="left:31.3px;top:293.1px;width:13.4px;text-align:center;font-size:7.2px;font-weight:normal;color:#2a2a2a">14</div>
<div class="a" style="left:45px;top:290.5px;width:13px;height:12px;border-right:1px solid #e6e6e8;border-bottom:1px solid #e6e6e8"></div>
<div class="t" style="left:44.7px;top:293.1px;width:13.4px;text-align:center;font-size:7.2px;font-weight:bold;color:#2a2a2a">15</div>
<div class="a" style="left:58px;top:290.5px;width:14px;height:12px;border-right:1px solid #e6e6e8;border-bottom:1px solid #e6e6e8"></div>
<div class="t" style="left:58.1px;top:293.1px;width:13.4px;text-align:center;font-size:7.2px;font-weight:normal;color:#2a2a2a">16</div>
<div class="a" style="left:72px;top:290.5px;width:13px;height:12px;border-right:1px solid #e6e6e8;border-bottom:1px solid #e6e6e8"></div>
<div class="t" style="left:71.5px;top:293.1px;width:13.4px;text-align:center;font-size:7.2px;font-weight:normal;color:#2a2a2a">17</div>
<div class="a" style="left:85px;top:290.5px;width:13px;height:12px;border-right:1px solid #e6e6e8;border-bottom:1px solid #e6e6e8"></div>
<div class="t" style="left:84.9px;top:293.1px;width:13.4px;text-align:center;font-size:7.2px;font-weight:normal;color:#2a2a2a">18</div>
<div class="a" style="left:98px;top:290.5px;width:14px;height:12px;border-right:1px solid #e6e6e8;border-bottom:1px solid #e6e6e8"></div>
<div class="t" style="left:98.3px;top:293.1px;width:13.4px;text-align:center;font-size:7.2px;font-weight:normal;color:#c62a2a">19</div>
<div class="a" style="left:112px;top:290.5px;width:13px;height:12px;border-right:1px solid #e6e6e8;border-bottom:1px solid #e6e6e8"></div>
<div class="t" style="left:111.7px;top:293.1px;width:13.4px;text-align:center;font-size:7.2px;font-weight:normal;color:#c62a2a">20</div>
<div class="t" style="left:17px;top:306.1px;width:13px;text-align:center;font-size:5.6px;color:#3a3a55">43</div>
<div class="a" style="left:31px;top:302.5px;width:14px;height:12px;border-right:1px solid #e6e6e8;border-bottom:1px solid #e6e6e8"></div>
<div class="t" style="left:31.3px;top:305.1px;width:13.4px;text-align:center;font-size:7.2px;font-weight:normal;color:#2a2a2a">21</div>
<div class="a" style="left:45px;top:302.5px;width:13px;height:12px;border-right:1px solid #e6e6e8;border-bottom:1px solid #e6e6e8"></div>
<div class="t" style="left:44.7px;top:305.1px;width:13.4px;text-align:center;font-size:7.2px;font-weight:normal;color:#2a2a2a">22</div>
<div class="a" style="left:58px;top:302.5px;width:14px;height:12px;border-right:1px solid #e6e6e8;border-bottom:1px solid #e6e6e8"></div>
<div class="t" style="left:58.1px;top:305.1px;width:13.4px;text-align:center;font-size:7.2px;font-weight:normal;color:#2a2a2a">23</div>
<div class="a" style="left:72px;top:302.5px;width:13px;height:12px;border-right:1px solid #e6e6e8;border-bottom:1px solid #e6e6e8"></div>
<div class="t" style="left:71.5px;top:305.1px;width:13.4px;text-align:center;font-size:7.2px;font-weight:normal;color:#2a2a2a">24</div>
<div class="a" style="left:85px;top:302.5px;width:13px;height:12px;border-right:1px solid #e6e6e8;border-bottom:1px solid #e6e6e8"></div>
<div class="t" style="left:84.9px;top:305.1px;width:13.4px;text-align:center;font-size:7.2px;font-weight:bold;color:#2a2a2a">25</div>
<div class="a" style="left:98px;top:302.5px;width:14px;height:12px;border-right:1px solid #e6e6e8;border-bottom:1px solid #e6e6e8"></div>
<div class="t" style="left:98.3px;top:305.1px;width:13.4px;text-align:center;font-size:7.2px;font-weight:normal;color:#c62a2a">26</div>
<div class="a" style="left:112px;top:302.5px;width:13px;height:12px;border-right:1px solid #e6e6e8;border-bottom:1px solid #e6e6e8"></div>
<div class="t" style="left:111.7px;top:305.1px;width:13.4px;text-align:center;font-size:7.2px;font-weight:normal;color:#c62a2a">27</div>
<div class="t" style="left:17px;top:318.1px;width:13px;text-align:center;font-size:5.6px;color:#3a3a55">44</div>
<div class="a" style="left:31px;top:314.5px;width:14px;height:12px;border-right:1px solid #e6e6e8;border-bottom:1px solid #e6e6e8"></div>
<div class="t" style="left:31.3px;top:317.1px;width:13.4px;text-align:center;font-size:7.2px;font-weight:normal;color:#2a2a2a">28</div>
<div class="a" style="left:45px;top:314.5px;width:13px;height:12px;background:#e6e6ea;border-right:1px solid #e6e6e8;border-bottom:1px solid #e6e6e8"></div>
<div class="t" style="left:44.7px;top:317.1px;width:13.4px;text-align:center;font-size:7.2px;font-weight:normal;color:#2a2a2a">29</div>
<div class="a" style="left:58px;top:314.5px;width:14px;height:12px;border-right:1px solid #e6e6e8;border-bottom:1px solid #e6e6e8"></div>
<div class="t" style="left:58.1px;top:317.1px;width:13.4px;text-align:center;font-size:7.2px;font-weight:normal;color:#2a2a2a">30</div>
<div class="a" style="left:72px;top:314.5px;width:13px;height:12px;border-right:1px solid #e6e6e8;border-bottom:1px solid #e6e6e8"></div>
<div class="t" style="left:71.5px;top:317.1px;width:13.4px;text-align:center;font-size:7.2px;font-weight:normal;color:#2a2a2a">31</div>
<div class="a" style="left:85px;top:314.5px;width:13px;height:12px;border-right:1px solid #e6e6e8;border-bottom:1px solid #e6e6e8"></div>
<div class="t" style="left:84.9px;top:317.1px;width:13.4px;text-align:center;font-size:7.2px;font-weight:normal;color:#c4c4cc">1</div>
<div class="a" style="left:98px;top:314.5px;width:14px;height:12px;border-right:1px solid #e6e6e8;border-bottom:1px solid #e6e6e8"></div>
<div class="t" style="left:98.3px;top:317.1px;width:13.4px;text-align:center;font-size:7.2px;font-weight:normal;color:#c4c4cc">2</div>
<div class="a" style="left:112px;top:314.5px;width:13px;height:12px;border-right:1px solid #e6e6e8;border-bottom:1px solid #e6e6e8"></div>
<div class="t" style="left:111.7px;top:317.1px;width:13.4px;text-align:center;font-size:7.2px;font-weight:normal;color:#c4c4cc">3</div>
<div class="t" style="left:17px;top:330.1px;width:13px;text-align:center;font-size:5.6px;color:#3a3a55">45</div>
<div class="a" style="left:31px;top:326.5px;width:14px;height:12px;border-right:1px solid #e6e6e8;border-bottom:1px solid #e6e6e8"></div>
<div class="t" style="left:31.3px;top:329.1px;width:13.4px;text-align:center;font-size:7.2px;font-weight:normal;color:#c4c4cc">4</div>
<div class="a" style="left:45px;top:326.5px;width:13px;height:12px;border-right:1px solid #e6e6e8;border-bottom:1px solid #e6e6e8"></div>
<div class="t" style="left:44.7px;top:329.1px;width:13.4px;text-align:center;font-size:7.2px;font-weight:normal;color:#c4c4cc">5</div>
<div class="a" style="left:58px;top:326.5px;width:14px;height:12px;border-right:1px solid #e6e6e8;border-bottom:1px solid #e6e6e8"></div>
<div class="t" style="left:58.1px;top:329.1px;width:13.4px;text-align:center;font-size:7.2px;font-weight:normal;color:#c4c4cc">6</div>
<div class="a" style="left:72px;top:326.5px;width:13px;height:12px;border-right:1px solid #e6e6e8;border-bottom:1px solid #e6e6e8"></div>
<div class="t" style="left:71.5px;top:329.1px;width:13.4px;text-align:center;font-size:7.2px;font-weight:normal;color:#c4c4cc">7</div>
<div class="a" style="left:85px;top:326.5px;width:13px;height:12px;border-right:1px solid #e6e6e8;border-bottom:1px solid #e6e6e8"></div>
<div class="t" style="left:84.9px;top:329.1px;width:13.4px;text-align:center;font-size:7.2px;font-weight:normal;color:#c4c4cc">8</div>
<div class="a" style="left:98px;top:326.5px;width:14px;height:12px;border-right:1px solid #e6e6e8;border-bottom:1px solid #e6e6e8"></div>
<div class="t" style="left:98.3px;top:329.1px;width:13.4px;text-align:center;font-size:7.2px;font-weight:normal;color:#c4c4cc">9</div>
<div class="a" style="left:112px;top:326.5px;width:13px;height:12px;border-right:1px solid #e6e6e8;border-bottom:1px solid #e6e6e8"></div>
<div class="t" style="left:111.7px;top:329.1px;width:13.4px;text-align:center;font-size:7.2px;font-weight:normal;color:#c4c4cc">10</div>
<div class="a" style="left:31px;top:266.5px;width:94px;height:1px;background:#e6e6e8"></div>
<div class="a" style="left:31px;top:266.5px;width:1px;height:72px;background:#e6e6e8"></div>

<div class="a" style="left:5px;top:374px;width:140px;height:159px;border:1px solid #e2e2e4;border-radius:1px"></div>
<div class="a" style="left:8px;top:370px;width:72px;height:8px;background:#f0f0f2"></div>
<div class="t" style="left:10px;top:371.3px;font-size:7.1px;color:#222">Resource View Mode</div>
<div class="a" style="left:8.5px;top:383.5px;width:132.5px;height:14px;background:#e4e4e6;border:1px solid #adadb0"></div>
<div class="t" style="left:11px;top:387.6px;font-size:7.1px;color:#111">Normal</div>
<svg class="a" style="left:130px;top:387.5px" width="8" height="6"><path d="M1 1.5l3 3 3-3" fill="none" stroke="#555" stroke-width="1"/></svg>
<div class="t" style="left:10px;top:401px;font-size:7.1px;color:#b4b4b8">Show/Hide:</div>
<div class="a" style="left:8.5px;top:410px;width:132.5px;height:109px;background:#e9ecec;border:1px solid #d0d2d2"></div>


<div class="a" style="left:155px;top:118.5px;width:16px;height:15px;background:linear-gradient(#f4f4f6,#e2e2e6);border:1px solid #c4c4c8;border-radius:2px"></div>
<div class="a" style="left:178px;top:118.5px;width:16px;height:15px;background:linear-gradient(#f4f4f6,#e2e2e6);border:1px solid #c4c4c8;border-radius:2px"></div>
<svg class="a" style="left:155px;top:118px" width="40" height="16"><path d="M5.7 8.2l4.2-3.3v6.6z" fill="#626262"/><path d="M34 8.2l-4.2-3.3v6.6z" fill="#626262"/></svg>
<div class="t" style="left:200px;top:122.1px;font-size:8px;transform:scaleX(0.912);transform-origin:left center;color:#1a1a2a">September 30, 2019 - October 6, 2019</div>

<div class="a" style="left:149px;top:140px;width:430px;height:31px;background:linear-gradient(#7a98f0 0,#7a98f0 1px,#1a55f7 1px,#1a55f7 16px,#4c72f2 16px,#4c72f2 21px,#5e90f6 21px,#5e90f6 25px,#6cb0fa 25px,#6cb0fa 29px,#1c55f5 29px,#1c55f5 31px)"></div><div class="t" style="left:149px;top:143.52px;width:427px;text-align:right;font-size:8px;transform:scaleX(0.91);transform-origin:right center;color:#f4f6ff">Monday, September 30</div><div class="t" style="left:149px;top:152.22px;width:427px;text-align:right;font-size:8px;transform:scaleX(0.91);transform-origin:right center;color:#f4f6ff">(2 Appts, 19.00 Hrs)</div><div class="t" style="left:149px;top:160.92px;width:427px;text-align:right;font-size:8px;transform:scaleX(0.91);transform-origin:right center;color:#f4f6ff">(0.00 Order Hrs)</div>
<div class="a" style="left:149px;top:267px;width:430px;height:31px;background:linear-gradient(#7a98f0 0,#7a98f0 1px,#1a55f7 1px,#1a55f7 16px,#4c72f2 16px,#4c72f2 21px,#5e90f6 21px,#5e90f6 25px,#6cb0fa 25px,#6cb0fa 29px,#1c55f5 29px,#1c55f5 31px)"></div><div class="t" style="left:149px;top:270.52px;width:427px;text-align:right;font-size:8px;transform:scaleX(0.91);transform-origin:right center;color:#f4f6ff">Tuesday, October 1</div><div class="t" style="left:149px;top:279.22px;width:427px;text-align:right;font-size:8px;transform:scaleX(0.91);transform-origin:right center;color:#f4f6ff">(1 Appts, 9.50 Hrs)</div><div class="t" style="left:149px;top:287.92px;width:427px;text-align:right;font-size:8px;transform:scaleX(0.91);transform-origin:right center;color:#f4f6ff">(0.00 Order Hrs)</div>
<div class="a" style="left:149px;top:394px;width:430px;height:31px;background:linear-gradient(#7a98f0 0,#7a98f0 1px,#1a55f7 1px,#1a55f7 16px,#4c72f2 16px,#4c72f2 21px,#5e90f6 21px,#5e90f6 25px,#6cb0fa 25px,#6cb0fa 29px,#1c55f5 29px,#1c55f5 31px)"></div><div class="t" style="left:149px;top:396.72px;width:427px;text-align:right;font-size:8px;transform:scaleX(0.91);transform-origin:right center;color:#f4f6ff">Wednesday, October 2</div><div class="t" style="left:149px;top:405.42px;width:427px;text-align:right;font-size:8px;transform:scaleX(0.91);transform-origin:right center;color:#f4f6ff">(1 Appts, 9.50 Hrs)</div><div class="t" style="left:149px;top:414.12px;width:427px;text-align:right;font-size:8px;transform:scaleX(0.91);transform-origin:right center;color:#f4f6ff">(0.00 Order Hrs)</div>
<div class="a" style="left:579px;top:140px;width:428px;height:31px;background:linear-gradient(#7a98f0 0,#7a98f0 1px,#1a55f7 1px,#1a55f7 16px,#4c72f2 16px,#4c72f2 21px,#5e90f6 21px,#5e90f6 25px,#6cb0fa 25px,#6cb0fa 29px,#1c55f5 29px,#1c55f5 31px)"></div><div class="t" style="left:579px;top:143.52px;width:427.5px;text-align:right;font-size:8px;transform:scaleX(0.91);transform-origin:right center;color:#f4f6ff">Thursday, October 3</div><div class="t" style="left:579px;top:152.22px;width:427.5px;text-align:right;font-size:8px;transform:scaleX(0.91);transform-origin:right center;color:#f4f6ff">(2 Appts, 19.00 Hrs)</div><div class="t" style="left:579px;top:160.92px;width:427.5px;text-align:right;font-size:8px;transform:scaleX(0.91);transform-origin:right center;color:#f4f6ff">(0.00 Order Hrs)</div>
<div class="a" style="left:579px;top:267px;width:428px;height:31px;background:linear-gradient(#7a98f0 0,#7a98f0 1px,#1a55f7 1px,#1a55f7 16px,#4c72f2 16px,#4c72f2 21px,#5e90f6 21px,#5e90f6 25px,#6cb0fa 25px,#6cb0fa 29px,#1c55f5 29px,#1c55f5 31px)"></div><div class="t" style="left:579px;top:270.52px;width:427.5px;text-align:right;font-size:8px;transform:scaleX(0.91);transform-origin:right center;color:#f4f6ff">Friday, October 4</div><div class="t" style="left:579px;top:279.22px;width:427.5px;text-align:right;font-size:8px;transform:scaleX(0.91);transform-origin:right center;color:#f4f6ff">(2 Appts, 19.00 Hrs)</div><div class="t" style="left:579px;top:287.92px;width:427.5px;text-align:right;font-size:8px;transform:scaleX(0.91);transform-origin:right center;color:#f4f6ff">(0.00 Order Hrs)</div>
<div class="a" style="left:579px;top:394px;width:428px;height:31px;background:linear-gradient(#7a98f0 0,#7a98f0 1px,#1a55f7 1px,#1a55f7 16px,#4c72f2 16px,#4c72f2 21px,#5e90f6 21px,#5e90f6 25px,#6cb0fa 25px,#6cb0fa 29px,#1c55f5 29px,#1c55f5 31px)"></div><div class="t" style="left:579px;top:396.72px;width:427.5px;text-align:right;font-size:8px;transform:scaleX(0.91);transform-origin:right center;color:#f4f6ff">Saturday, October 5</div><div class="t" style="left:579px;top:405.42px;width:427.5px;text-align:right;font-size:8px;transform:scaleX(0.91);transform-origin:right center;color:#f4f6ff">(0 Appts, 0.00 Hrs)</div><div class="t" style="left:579px;top:414.12px;width:427.5px;text-align:right;font-size:8px;transform:scaleX(0.91);transform-origin:right center;color:#f4f6ff">(0.00 Order Hrs)</div>
<div class="a" style="left:579px;top:457px;width:428px;height:31px;background:linear-gradient(#7a98f0 0,#7a98f0 1px,#1a55f7 1px,#1a55f7 16px,#4c72f2 16px,#4c72f2 21px,#5e90f6 21px,#5e90f6 25px,#6cb0fa 25px,#6cb0fa 29px,#1c55f5 29px,#1c55f5 31px)"></div><div class="t" style="left:579px;top:460.52px;width:427.5px;text-align:right;font-size:8px;transform:scaleX(0.91);transform-origin:right center;color:#f4f6ff">Sunday, October 6</div><div class="t" style="left:579px;top:469.22px;width:427.5px;text-align:right;font-size:8px;transform:scaleX(0.91);transform-origin:right center;color:#f4f6ff">(0 Appts, 0.00 Hrs)</div><div class="t" style="left:579px;top:477.92px;width:427.5px;text-align:right;font-size:8px;transform:scaleX(0.91);transform-origin:right center;color:#f4f6ff">(0.00 Order Hrs)</div>
<div class="a" style="left:578px;top:170px;width:1px;height:348px;background:#e4e4e6"></div><div class="a" style="left:578px;top:458px;width:1px;height:29px;background:#4a70f0"></div><div class="a" style="left:578px;top:141px;width:1px;height:12px;background:#d8e0f4"></div><div class="a" style="left:578px;top:153px;width:1px;height:16px;background:#2a58e0"></div><div class="a" style="left:578px;top:268px;width:1px;height:12px;background:#d8e0f4"></div><div class="a" style="left:578px;top:280px;width:1px;height:16px;background:#2a58e0"></div><div class="a" style="left:578px;top:395px;width:1px;height:12px;background:#d8e0f4"></div><div class="a" style="left:578px;top:407px;width:1px;height:16px;background:#2a58e0"></div>
<div class="a" style="left:150px;top:172px;width:427px;height:15px;background:linear-gradient(90deg,#fff 0,#fff 5px,rgba(255,255,255,0) 5px),linear-gradient(#f6f6f8,#eeedf1);border:1px solid #d4d4d6;border-left-color:#a8bce0;border-right-color:#8c8c8e;border-bottom:2px solid #bcbcbe"></div><div class="t" style="left:151.8px;top:175.62px;width:427px;text-align:center;font-size:8px;transform:scaleX(0.875);color:#222">Dabbs, Dorthea</div>
<div class="a" style="left:150px;top:188px;width:427px;height:15px;background:linear-gradient(90deg,#fff 0,#fff 5px,rgba(255,255,255,0) 5px),linear-gradient(#f6f6f8,#eeedf1);border:1px solid #d4d4d6;border-left-color:#a8bce0;border-right-color:#8c8c8e;border-bottom:2px solid #bcbcbe"></div><div class="t" style="left:151.8px;top:191.62px;width:427px;text-align:center;font-size:8px;transform:scaleX(0.875);color:#222">Gaier, Esmeralda</div>
<div class="a" style="left:150px;top:299px;width:427px;height:15px;background:linear-gradient(90deg,#fff 0,#fff 5px,rgba(255,255,255,0) 5px),linear-gradient(#f6f6f8,#eeedf1);border:1px solid #d4d4d6;border-left-color:#a8bce0;border-right-color:#8c8c8e;border-bottom:2px solid #bcbcbe"></div><div class="t" style="left:151.8px;top:302.62px;width:427px;text-align:center;font-size:8px;transform:scaleX(0.875);color:#222">Sackrider, Dominga</div>
<div class="a" style="left:150px;top:426px;width:427px;height:15px;background:linear-gradient(90deg,#fff 0,#fff 5px,rgba(255,255,255,0) 5px),linear-gradient(#f6f6f8,#eeedf1);border:1px solid #d4d4d6;border-left-color:#a8bce0;border-right-color:#8c8c8e;border-bottom:2px solid #bcbcbe"></div><div class="t" style="left:151.8px;top:429.62px;width:427px;text-align:center;font-size:8px;transform:scaleX(0.875);color:#222">Raap, Farrah</div>
<div class="a" style="left:579px;top:172px;width:427px;height:15px;background:linear-gradient(90deg,#fff 0,#fff 5px,rgba(255,255,255,0) 5px),linear-gradient(#f6f6f8,#eeedf1);border:1px solid #d4d4d6;border-left-color:#a8bce0;border-right-color:#8c8c8e;border-bottom:2px solid #bcbcbe"></div><div class="t" style="left:580.8px;top:175.62px;width:427px;text-align:center;font-size:8px;transform:scaleX(0.875);color:#222">garcia, bryan</div>
<div class="a" style="left:579px;top:188px;width:427px;height:15px;background:linear-gradient(90deg,#fff 0,#fff 5px,rgba(255,255,255,0) 5px),linear-gradient(#f6f6f8,#eeedf1);border:1px solid #d4d4d6;border-left-color:#a8bce0;border-right-color:#8c8c8e;border-bottom:2px solid #bcbcbe"></div><div class="t" style="left:580.8px;top:191.62px;width:427px;text-align:center;font-size:8px;transform:scaleX(0.875);color:#222">Dahn, Rosa</div>
<div class="a" style="left:579px;top:299px;width:427px;height:15px;background:linear-gradient(90deg,#fff 0,#fff 5px,rgba(255,255,255,0) 5px),linear-gradient(#f6f6f8,#eeedf1);border:1px solid #d4d4d6;border-left-color:#a8bce0;border-right-color:#8c8c8e;border-bottom:2px solid #bcbcbe"></div><div class="t" style="left:580.8px;top:302.62px;width:427px;text-align:center;font-size:8px;transform:scaleX(0.875);color:#222">Gales, Luella</div>
<div class="a" style="left:579px;top:315px;width:427px;height:15px;background:linear-gradient(90deg,#fff 0,#fff 5px,rgba(255,255,255,0) 5px),linear-gradient(#f6f6f8,#eeedf1);border:1px solid #d4d4d6;border-left-color:#a8bce0;border-right-color:#8c8c8e;border-bottom:2px solid #bcbcbe"></div><div class="t" style="left:580.8px;top:318.62px;width:427px;text-align:center;font-size:8px;transform:scaleX(0.875);color:#222">Eaton, Soraya</div>

<div class="a" style="left:1007px;top:140px;width:11px;height:378px;background:#f6f6fa;border-top:1px solid #e0e0e4"></div>
<svg class="a" style="left:1007px;top:142px" width="11" height="8"><path d="M3 5.5l2.5-2.5 2.5 2.5z" fill="#606066"/></svg>
<svg class="a" style="left:1007px;top:510px" width="11" height="8"><path d="M3 2.5l2.5 2.5 2.5-2.5z" fill="#606066"/></svg>
<div class="a" style="left:1010px;top:327px;width:5px;height:11px;background:#e2e2e6;border:1px solid #b4b4ba;border-radius:2px"></div>
<svg class="a" style="left:144px;top:318px" width="4" height="8"><path d="M3.5 1.5l-2.5 2.5 2.5 2.5z" fill="#777"/></svg>


<svg class="a" style="left:785.7px;top:507.2px" width="200" height="20" viewBox="0 0 200 20"><g transform="scale(1.0392,1)" fill="#7c7c7c"><rect x="0.00" y="0.00" width="11.00" height="2.10"/><rect x="0.00" y="0.00" width="2.10" height="10.20"/><rect x="0.00" y="8.10" width="11.00" height="2.10"/><rect x="8.90" y="4.05" width="2.10" height="6.15"/><rect x="5.50" y="4.05" width="5.50" height="2.10"/><rect x="12.70" y="0.00" width="11.00" height="2.10"/><rect x="12.70" y="0.00" width="2.10" height="10.20"/><rect x="12.70" y="8.10" width="11.00" height="2.10"/><rect x="12.70" y="4.05" width="9.35" height="2.10"/><rect x="25.40" y="0.00" width="11.00" height="2.10"/><rect x="29.85" y="0.00" width="2.10" height="10.20"/><rect x="41.90" y="0.00" width="11.00" height="2.10"/><rect x="41.90" y="0.00" width="2.10" height="6.15"/><rect x="41.90" y="4.05" width="11.00" height="2.10"/><rect x="50.80" y="4.05" width="2.10" height="6.15"/><rect x="41.90" y="8.10" width="11.00" height="2.10"/><rect x="54.60" y="0.00" width="2.10" height="10.20"/><rect x="63.50" y="0.00" width="2.10" height="10.20"/><rect x="54.60" y="4.05" width="11.00" height="2.10"/><rect x="67.30" y="0.00" width="11.00" height="2.10"/><rect x="67.30" y="0.00" width="2.10" height="10.20"/><rect x="67.30" y="8.10" width="11.00" height="2.10"/><rect x="76.20" y="0.00" width="2.10" height="10.20"/><rect x="80.00" y="0.00" width="11.00" height="2.10"/><rect x="80.00" y="0.00" width="2.10" height="10.20"/><rect x="88.90" y="0.00" width="2.10" height="6.15"/><rect x="80.00" y="4.05" width="11.00" height="2.10"/><rect x="96.50" y="0.00" width="11.00" height="2.10"/><rect x="96.50" y="0.00" width="2.10" height="6.15"/><rect x="96.50" y="4.05" width="11.00" height="2.10"/><rect x="105.40" y="4.05" width="2.10" height="6.15"/><rect x="96.50" y="8.10" width="11.00" height="2.10"/><rect x="109.20" y="0.00" width="11.00" height="2.10"/><rect x="113.65" y="0.00" width="2.10" height="10.20"/><rect x="121.90" y="0.00" width="2.10" height="10.20"/><rect x="130.80" y="0.00" width="2.10" height="10.20"/><rect x="121.90" y="8.10" width="11.00" height="2.10"/><rect x="134.60" y="0.00" width="11.00" height="2.10"/><rect x="134.60" y="0.00" width="2.10" height="10.20"/><rect x="134.60" y="4.05" width="9.35" height="2.10"/><rect x="147.30" y="0.00" width="11.00" height="2.10"/><rect x="147.30" y="0.00" width="2.10" height="10.20"/><rect x="147.30" y="4.05" width="9.35" height="2.10"/></g><g fill="none" stroke="#d4d4d4" stroke-width="0.8"><circle cx="173" cy="6" r="1.8"/><circle cx="180" cy="10" r="1.8"/><circle cx="186" cy="3" r="1.8"/><circle cx="181" cy="15.5" r="1.8"/><path d="M174.6 7l3.8 2M181.3 8.7l3.5-4M180.6 11.8l0.3 2M187.8 3.5l4 1.5M182.8 15.3l5 -0.8"/></g></svg><div class="t" style="left:786px;top:521px;font-size:5.2px;color:#d0d0d2;letter-spacing:5.9px">SOFTWARE SOLUTIONS</div>
<div class="t" style="left:828px;top:523px;font-size:7.5px;font-weight:bold;color:#f00000">Total Order Hours: 0.00, Total Scheduled Hours: 76.00</div>

<svg class="a" style="left:404px;top:255px" width="10" height="12"><path d="M1.2 1.1v8.2l1.9-1.8 1.5 3.1 1.3-0.6-1.4-3h2.8z" fill="#fff" stroke="#1a1a1a" stroke-width="0.85"/></svg>
<div id="status" class="a"></div>
</body></html>
